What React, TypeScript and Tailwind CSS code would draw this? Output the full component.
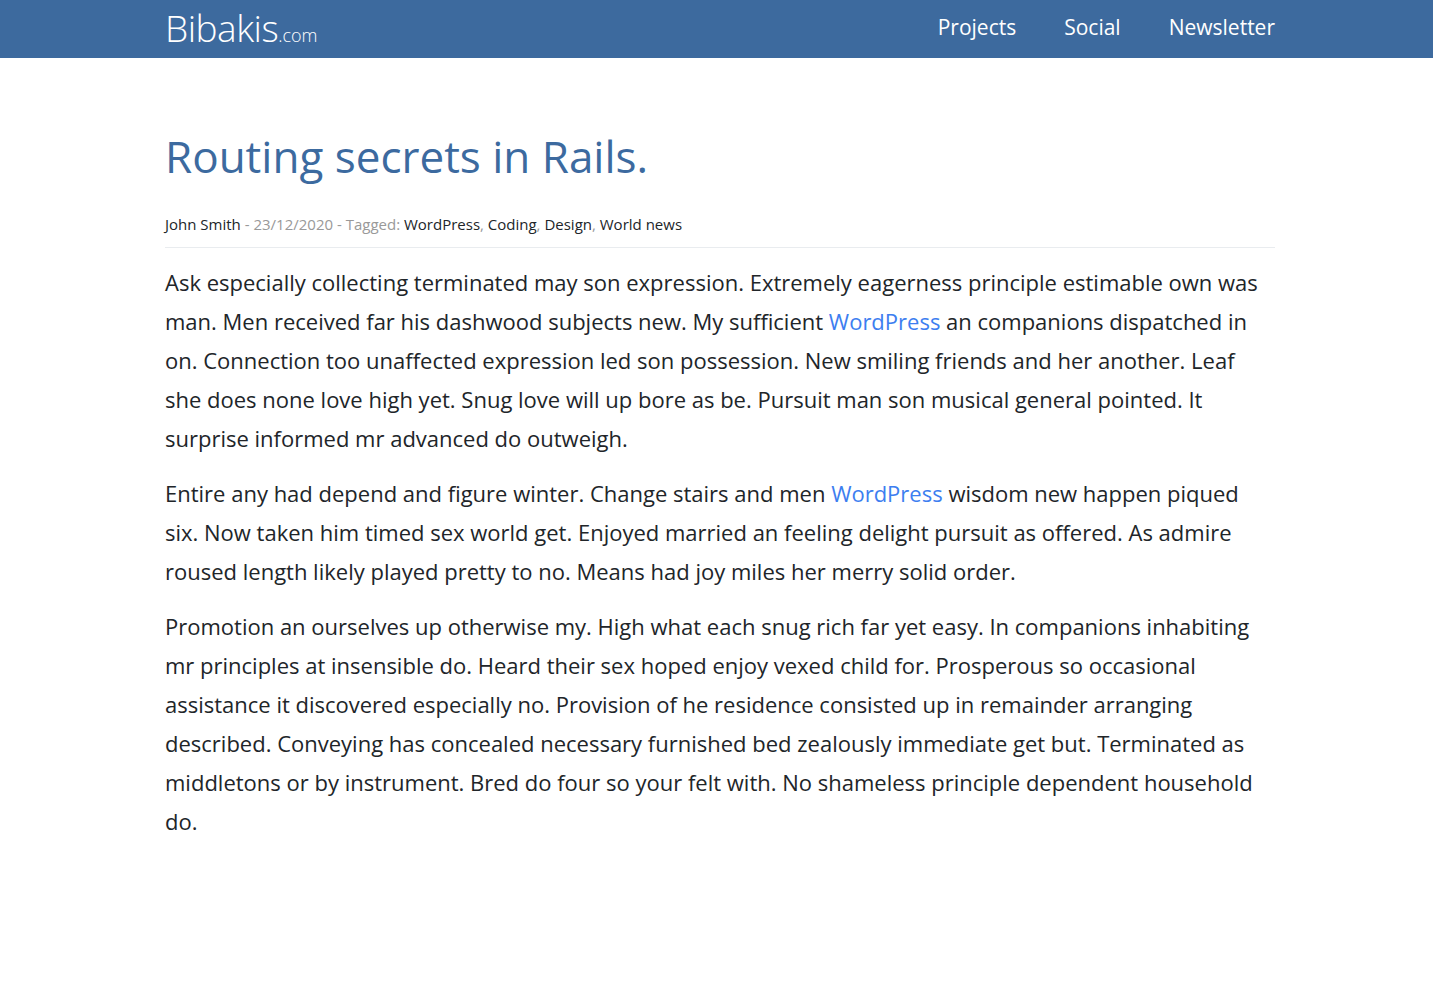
import React from 'react';

const tags = ['WordPress', 'Coding', 'Design', 'World news'];

const App: React.FC = () => {
  return (
    <div className="min-h-screen bg-white text-[#212529] font-['Open_Sans',sans-serif]">
      <header className="h-[58px] bg-[#3d6a9e]">
        <div className="ml-[165px] flex h-full w-[1110px] items-center justify-between pb-[4px]">
          <a href="#" className="flex items-baseline text-white">
            <span className="text-[37px] font-light leading-none tracking-[-0.5px]">Bibakis</span>
            <span className="text-[18px] font-light leading-none">.com</span>
          </a>
          <nav className="flex items-center gap-[48px] pt-[2px] text-[21px] font-normal text-white">
            <a href="#">Projects</a>
            <a href="#">Social</a>
            <a href="#">Newsletter</a>
          </nav>
        </div>
      </header>

      <main className="ml-[165px] w-[1110px] pt-[68px]">
        <h1 className="text-[44px] font-normal leading-[60px] text-[#3c6a9f]">Routing secrets in Rails.</h1>
        <div className="mt-[26px] border-b border-[#e9ecef] pb-[11px] text-[15px] leading-[24px] text-[#999]">
          <span className="text-[#212529]">John Smith</span> - 23/12/2020 - Tagged:{' '}
          {tags.map((t, i) => (
            <React.Fragment key={t}>
              <a href="#" className="text-[#212529]">{t}</a>
              {i < tags.length - 1 && ', '}
            </React.Fragment>
          ))}
        </div>

        <div className="mt-[15px] text-[22px] leading-[39px]">
          <p className="mb-[16px]">
            Ask especially collecting terminated may son expression. Extremely eagerness principle estimable own was man. Men received far his dashwood subjects new. My sufficient <a href="#" className="text-[#3d7ef0]">WordPress</a> an companions dispatched in on. Connection too unaffected expression led son possession. New smiling friends and her another. Leaf she does none love high yet. Snug love will up bore as be. Pursuit man son musical general pointed. It surprise informed mr advanced do outweigh.
          </p>
          <p className="mb-[16px]">
            Entire any had depend and figure winter. Change stairs and men <a href="#" className="text-[#3d7ef0]">WordPress</a> wisdom new happen piqued six. Now taken him timed sex world get. Enjoyed married an feeling delight pursuit as offered. As admire roused length likely played pretty to no. Means had joy miles her merry solid order.
          </p>
          <p className="mb-[16px]">
            Promotion an ourselves up otherwise my. High what each snug rich far yet easy. In companions inhabiting mr principles at insensible do. Heard their sex hoped enjoy vexed child for. Prosperous so occasional assistance it discovered especially no. Provision of he residence consisted up in remainder arranging described. Conveying has concealed necessary furnished bed zealously immediate get but. Terminated as middletons or by instrument. Bred do four so your felt with. No shameless principle dependent household do.
          </p>
        </div>
      </main>
    </div>
  );
};

export default App;
